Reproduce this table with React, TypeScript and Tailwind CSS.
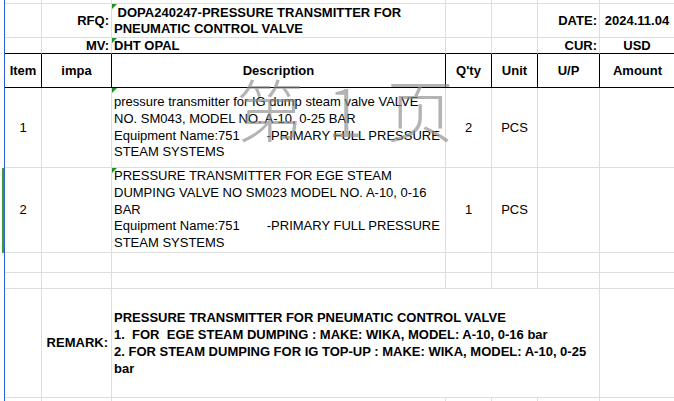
import React from 'react';

const COLS = 'grid grid-cols-[5px_37px_70px_334px_46px_46px_62px_80px]';
const GRID = 'border-r border-b border-[#dedede]';

const Marker = () => (
  <span className="absolute left-0 top-0 w-0 h-0 border-t-[5px] border-r-[5px] border-t-[#1f8f2a] border-r-transparent" />
);

const Gutter = ({ green = false }: { green?: boolean }) => (
  <div className="border-r border-[#2b5fd6] flex">
    {green && <div className="ml-[2px] w-[2px] bg-[#3f9b2f]" />}
  </div>
);

const HeaderCell = ({ label }: { label: string }) => (
  <div className="border-r border-b border-black flex items-center justify-center font-bold">{label}</div>
);

const item1 = [
  'pressure transmitter for IG dump steam valve VALVE',
  'NO. SM043, MODEL NO. A-10, 0-25 BAR',
  'EQUIP',
  'STEAM SYSTEMS',
];

const item2 = [
  'PRESSURE TRANSMITTER FOR EGE STEAM',
  'DUMPING VALVE NO SM023 MODEL NO. A-10, 0-16',
  'BAR',
  'EQUIP',
  'STEAM SYSTEMS',
];

const DescLines = ({ lines }: { lines: string[] }) => (
  <div className="relative pl-[2px] flex flex-col justify-center leading-[16.8px] whitespace-nowrap">
    <Marker />
    {lines.map((l, i) =>
      l === 'EQUIP' ? (
        <div key={i}>
          Equipment Name:751<span className="inline-block w-[27px]" />-PRIMARY FULL PRESSURE
        </div>
      ) : (
        <div key={i}>{l}</div>
      )
    )}
  </div>
);

const ItemRow = ({ no, qty, lines, h, green }: { no: string; qty: string; lines: string[]; h: string; green?: boolean }) => (
  <div className={`${COLS} ${h}`}>
    <Gutter green={green} />
    <div className={`${GRID} flex items-center justify-center`}>{no}</div>
    <div className={GRID} />
    <div className={`${GRID} flex`}>
      <DescLines lines={lines} />
    </div>
    <div className={`${GRID} flex items-center justify-center`}>{qty}</div>
    <div className={`${GRID} flex items-center justify-center`}>PCS</div>
    <div className={GRID} />
    <div className={GRID} />
  </div>
);

const EmptyRow = ({ h }: { h: string }) => (
  <div className={`${COLS} ${h}`}>
    <Gutter />
    <div className={GRID} />
    <div className={GRID} />
    <div className={GRID} />
    <div className={GRID} />
    <div className={GRID} />
    <div className={GRID} />
    <div className={GRID} />
  </div>
);

export default function App() {
  return (
    <div className="relative w-[674px] h-[401px] overflow-hidden bg-white text-black text-[13px] font-['Liberation_Sans',Arial,sans-serif]">
      <EmptyRow h="h-[4px]" />

      {/* RFQ row */}
      <div className={`${COLS} h-[34px] font-bold`}>
        <Gutter />
        <div className={GRID} />
        <div className={`${GRID} flex items-center justify-end pr-[2px]`}>RFQ:</div>
        <div className={`${GRID} relative flex flex-col justify-center pl-[2px] leading-[16px] whitespace-pre`}>
          <Marker />
          <div> DOPA240247-PRESSURE TRANSMITTER FOR</div>
          <div>PNEUMATIC CONTROL VALVE</div>
        </div>
        <div className={GRID} />
        <div className={GRID} />
        <div className={`${GRID} flex items-center justify-end pr-[2px]`}>DATE:</div>
        <div className={`${GRID} flex items-center justify-center pr-[5px]`}>2024.11.04</div>
      </div>

      {/* MV row */}
      <div className={`${COLS} h-[16px] font-bold leading-[15px]`}>
        <Gutter />
        <div className="border-r border-b border-[#dedede] border-b-black" />
        <div className="border-r border-b border-[#dedede] border-b-black flex items-center justify-end pr-[2px]">MV:</div>
        <div className="relative border-r border-b border-[#dedede] border-b-black flex items-center pl-[2px]">
          <Marker />
          DHT OPAL
        </div>
        <div className="border-r border-b border-[#dedede] border-b-black" />
        <div className="border-r border-b border-[#dedede] border-b-black" />
        <div className="border-r border-b border-[#dedede] border-b-black flex items-center justify-end pr-[2px]">CUR:</div>
        <div className="border-r border-b border-[#dedede] border-b-black flex items-center justify-center pr-[5px]">USD</div>
      </div>

      {/* Header row */}
      <div className={`${COLS} h-[34px]`}>
        <Gutter />
        <HeaderCell label="Item" />
        <HeaderCell label="impa" />
        <HeaderCell label="Description" />
        <HeaderCell label="Q'ty" />
        <HeaderCell label="Unit" />
        <HeaderCell label="U/P" />
        <div className="border-b border-black flex items-center justify-center font-bold pr-[5px]">Amount</div>
      </div>

      <ItemRow no="1" qty="2" lines={item1} h="h-[80px]" />
      <ItemRow no="2" qty="1" lines={item2} h="h-[85px]" green />

      <EmptyRow h="h-[20px]" />
      <EmptyRow h="h-[16px]" />

      {/* Remark row */}
      <div className={`${COLS} h-[109px] font-bold`}>
        <Gutter />
        <div className={GRID} />
        <div className={`${GRID} flex items-center justify-end pr-[3px]`}>REMARK:</div>
        <div className={`${GRID} col-span-4 flex flex-col justify-center pl-[2px] leading-[17px] whitespace-pre`}>
          <div>PRESSURE TRANSMITTER FOR PNEUMATIC CONTROL VALVE</div>
          <div>1.  FOR  EGE STEAM DUMPING : MAKE: WIKA, MODEL: A-10, 0-16 bar</div>
          <div>2. FOR STEAM DUMPING FOR IG TOP-UP : MAKE: WIKA, MODEL: A-10, 0-25</div>
          <div>bar</div>
        </div>
        <div className={GRID} />
      </div>

      <EmptyRow h="h-[10px]" />

      {/* page watermark */}
      <div className="pointer-events-none absolute left-[236px] top-[74px] flex items-start text-[68px] leading-none font-light text-[#8a8a8a]/65 font-['Noto_Sans_CJK_SC',sans-serif]">
        <span className="w-[68px]">第</span>
        <span className="w-[82px] text-center">1</span>
        <span>页</span>
      </div>
    </div>
  );
}
